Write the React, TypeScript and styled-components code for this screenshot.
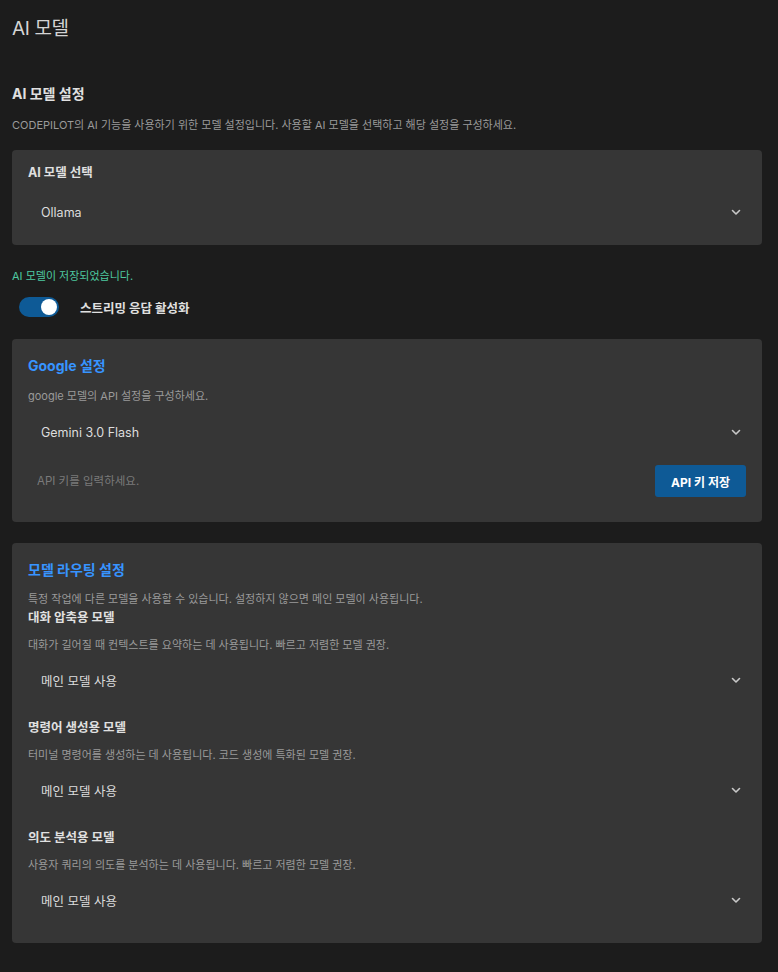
import React, { useState } from "react";
import styled, { createGlobalStyle } from "styled-components";

const GlobalStyle = createGlobalStyle`
  html, body {
    margin: 0;
    padding: 0;
    background: #1c1c1c;
  }
  body {
    font-family: "Inter", "Noto Sans CJK KR", sans-serif;
    color: #cccccc;
    -webkit-font-smoothing: antialiased;
  }
`;

const Page = styled.div`
  padding: 16px 16px 30px 12px;
  min-height: 100vh;
  box-sizing: border-box;
`;

const PageTitle = styled.h1`
  margin: 0;
  font-size: 19px;
  line-height: 26px;
  font-weight: 400;
  color: #d4d4d4;
  letter-spacing: -0.02em;
`;

const SectionTitle = styled.h2`
  margin: 42px 0 0;
  font-size: 14px;
  line-height: 20px;
  font-weight: 700;
  color: #e0e0e0;
`;

const Description = styled.p<{ $top?: number; $bottom?: number }>`
  margin: ${(p) => p.$top ?? 0}px 0 ${(p) => p.$bottom ?? 0}px;
  font-size: 11px;
  line-height: 16px;
  color: #9a9a9a;
`;

const Card = styled.section<{ $pt?: number; $pb?: number; $mt?: number }>`
  background: #363636;
  border-radius: 4px;
  margin-top: ${(p) => p.$mt ?? 0}px;
  padding: ${(p) => p.$pt ?? 16}px 16px ${(p) => p.$pb ?? 16}px;
`;

const CardTitle = styled.h3`
  margin: 0;
  font-size: 14px;
  line-height: 22px;
  font-weight: 700;
  color: #3794ff;
`;

const FieldLabel = styled.div<{ $lh?: number }>`
  font-size: 12.5px;
  line-height: ${(p) => p.$lh ?? 18}px;
  font-weight: 700;
  color: #e0e0e0;
`;

const SelectBox = styled.div<{ $top?: number }>`
  margin-top: ${(p) => p.$top ?? 0}px;
  height: 30px;
  display: flex;
  align-items: center;
  justify-content: space-between;
  padding: 0 4px 0 13px;
  font-size: 12.5px;
  color: #dddddd;
  cursor: pointer;
`;

const Chevron = () => (
  <svg width="12" height="12" viewBox="0 0 12 12" fill="none">
    <polyline
      points="2.5,4.5 6,8 9.5,4.5"
      stroke="#c8c8c8"
      strokeWidth="1.6"
      strokeLinecap="round"
      strokeLinejoin="round"
    />
  </svg>
);

const Select = ({ value, top }: { value: string; top?: number }) => (
  <SelectBox $top={top}>
    <span>{value}</span>
    <Chevron />
  </SelectBox>
);

const SavedNote = styled.div`
  margin-top: 23px;
  font-size: 11px;
  line-height: 16px;
  color: #4ec9a0;
`;

const ToggleRow = styled.label`
  display: flex;
  align-items: center;
  gap: 21px;
  margin: 13px 0 22px 7px;
  cursor: pointer;
`;

const Track = styled.span<{ $on: boolean }>`
  position: relative;
  width: 40px;
  height: 20px;
  border-radius: 10px;
  background: ${(p) => (p.$on ? "#0e5a96" : "#555")};
  flex-shrink: 0;
`;

const Knob = styled.span<{ $on: boolean }>`
  position: absolute;
  top: 2px;
  left: ${(p) => (p.$on ? 22 : 2)}px;
  width: 16px;
  height: 16px;
  border-radius: 50%;
  background: #ffffff;
  transition: left 0.15s;
`;

const ToggleLabel = styled.span`
  font-size: 12.5px;
  font-weight: 700;
  color: #e0e0e0;
`;

const KeyRow = styled.div`
  display: flex;
  align-items: center;
  gap: 12px;
  margin-top: 18px;
`;

const KeyInput = styled.input`
  flex: 1;
  height: 32px;
  background: transparent;
  border: none;
  outline: none;
  padding: 0 9px;
  font-family: inherit;
  font-size: 11.5px;
  color: #dddddd;
  &::placeholder {
    color: #7a7a7a;
  }
`;

const SaveButton = styled.button`
  height: 32px;
  padding: 0 16px;
  border: none;
  border-radius: 3px;
  background: #0e5a96;
  color: #ffffff;
  font-family: inherit;
  font-size: 12px;
  font-weight: 700;
  cursor: pointer;
  &:hover {
    background: #1170b8;
  }
`;

const Routes = styled.div`
  display: flex;
  flex-direction: column;
  gap: 24px;
`;

const RouteGroup = styled.div``;

const routes = [
  {
    label: "대화 압축용 모델",
    desc: "대화가 길어질 때 컨텍스트를 요약하는 데 사용됩니다. 빠르고 저렴한 모델 권장.",
  },
  {
    label: "명령어 생성용 모델",
    desc: "터미널 명령어를 생성하는 데 사용됩니다. 코드 생성에 특화된 모델 권장.",
  },
  {
    label: "의도 분석용 모델",
    desc: "사용자 쿼리의 의도를 분석하는 데 사용됩니다. 빠르고 저렴한 모델 권장.",
  },
];

const App = () => {
  const [streaming, setStreaming] = useState(true);

  return (
    <>
      <GlobalStyle />
      <Page>
        <PageTitle>AI 모델</PageTitle>

        <SectionTitle>AI 모델 설정</SectionTitle>
        <Description $top={13} $bottom={17}>
          CODEPILOT의 AI 기능을 사용하기 위한 모델 설정입니다. 사용할 AI 모델을 선택하고 해당 설정을 구성하세요.
        </Description>

        <Card $pb={18}>
          <FieldLabel $lh={14}>AI 모델 선택</FieldLabel>
          <Select value="Ollama" top={17} />
        </Card>

        <SavedNote>AI 모델이 저장되었습니다.</SavedNote>

        <ToggleRow onClick={() => setStreaming(!streaming)}>
          <Track $on={streaming}>
            <Knob $on={streaming} />
          </Track>
          <ToggleLabel>스트리밍 응답 활성화</ToggleLabel>
        </ToggleRow>

        <Card $pb={25}>
          <CardTitle>Google 설정</CardTitle>
          <Description $top={11}>google 모델의 API 설정을 구성하세요.</Description>
          <Select value="Gemini 3.0 Flash" top={13} />
          <KeyRow>
            <KeyInput placeholder="API 키를 입력하세요." />
            <SaveButton>API 키 저장</SaveButton>
          </KeyRow>
        </Card>

        <Card $mt={21} $pb={28}>
          <CardTitle>모델 라우팅 설정</CardTitle>
          <Description $top={10} $bottom={2}>
            특정 작업에 다른 모델을 사용할 수 있습니다. 설정하지 않으면 메인 모델이 사용됩니다.
          </Description>
          <Routes>
            {routes.map((r) => (
              <RouteGroup key={r.label}>
                <FieldLabel>{r.label}</FieldLabel>
                <Description $top={10}>{r.desc}</Description>
                <Select value="메인 모델 사용" top={12} />
              </RouteGroup>
            ))}
          </Routes>
        </Card>
      </Page>
    </>
  );
};

export default App;
